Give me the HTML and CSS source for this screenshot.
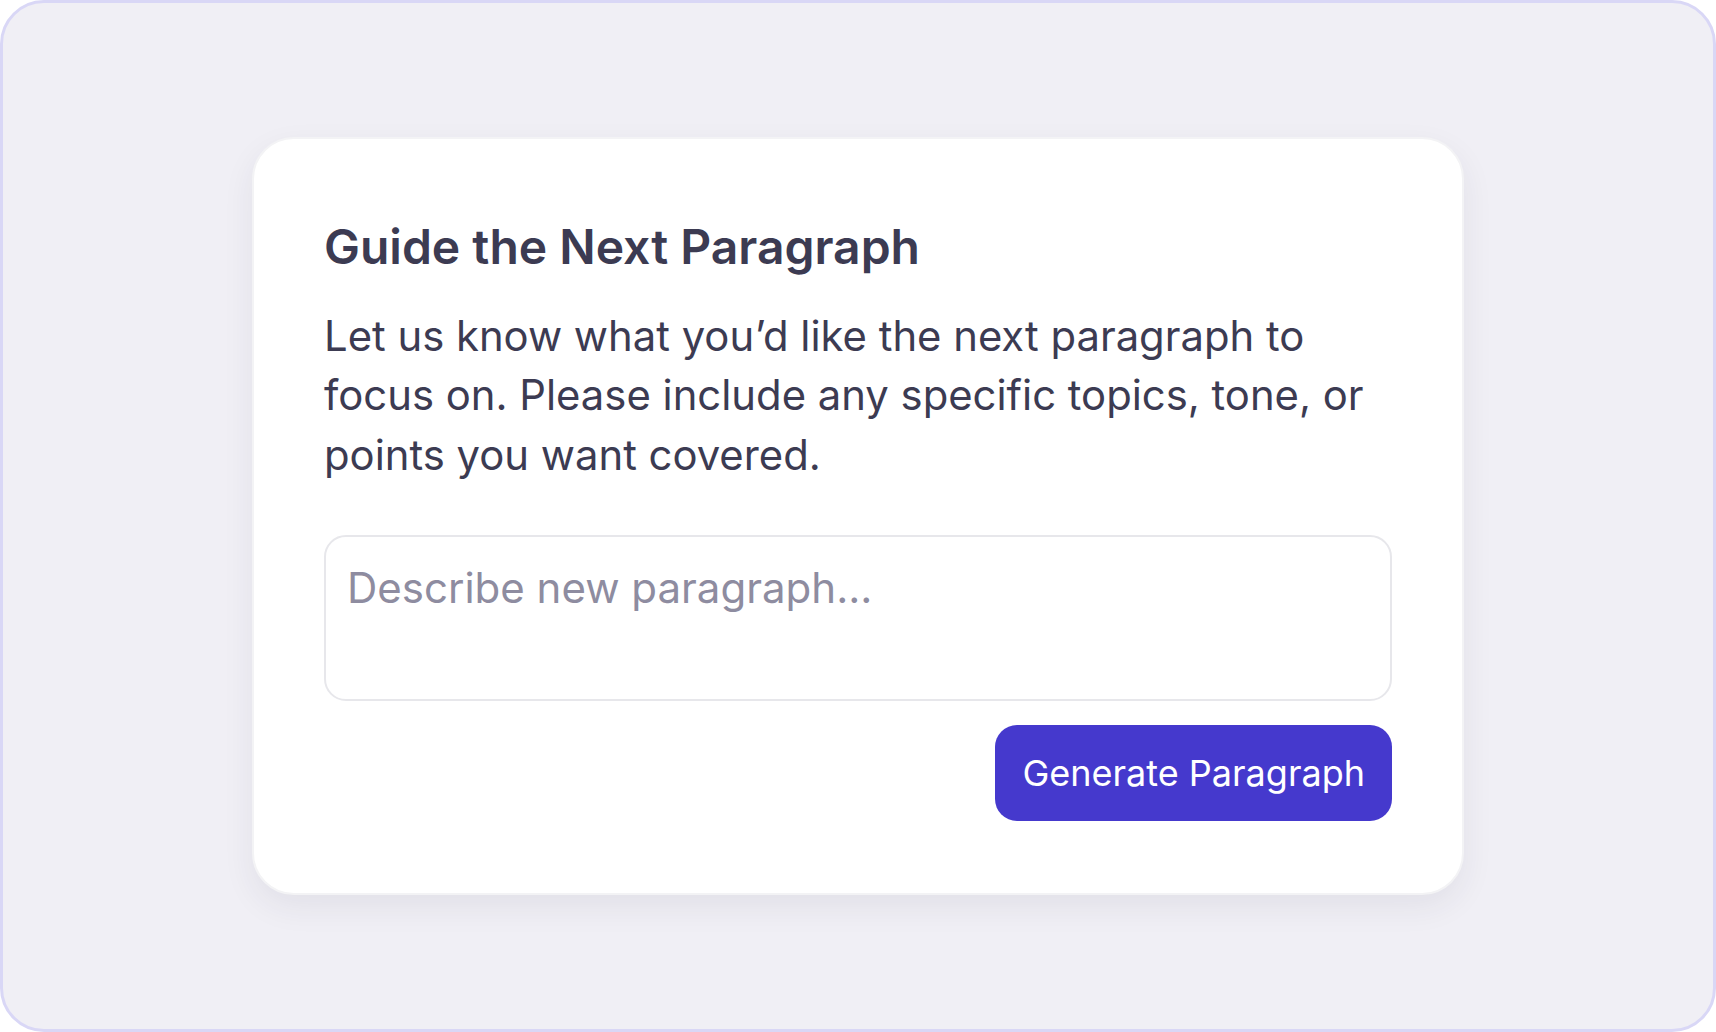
FILE: index.html
```html
<!DOCTYPE html>
<html lang="en">
<head>
    <meta charset="UTF-8">
    <meta name="viewport" content="width=device-width, initial-scale=1.0">
    <title>Guide the Next Paragraph</title>
    <link rel="stylesheet" href="styles.css">
</head>
<body>
    <div class="frame">
        <div class="card">
            <h1>Guide the Next Paragraph</h1>
            <p class="intro">Let us know what you’d like the next paragraph to focus on. Please include any specific topics, tone, or points you want covered.</p>

            <textarea class="prompt" placeholder="Describe new paragraph..."></textarea>

            <div class="actions">
                <button class="btn" type="button">Generate Paragraph</button>
            </div>
        </div>
    </div>
</body>
</html>
```

FILE: styles.css
```css
* {
    box-sizing: border-box;
}
html, body {
    height: 100%;
}
body {
    font-family: 'Inter', 'Noto Sans', sans-serif;
    background-color: #ffffff;
    color: #3c3b52;
    margin: 0;
    padding: 0;
}
.frame {
    height: 100%;
    background-color: #f0eff5;
    border: 3px solid #d9d7f6;
    border-radius: 44px;
    display: flex;
    align-items: center;
    justify-content: center;
}
.card {
    width: 1212px;
    padding: 72px 70px;
    background-color: #ffffff;
    border: 2px solid #f3f3f5;
    border-radius: 42px;
    box-shadow: 0 12px 32px rgba(40, 40, 70, 0.07);
}
h1 {
    margin: 0;
    font-size: 48px;
    line-height: 72px;
    font-weight: 600;
    color: #3c3b52;
}
.intro {
    margin: 24px 0 0;
    font-size: 41.8px;
    line-height: 59.5px;
    color: #3c3b52;
}
.prompt {
    display: block;
    width: 100%;
    height: 166px;
    margin-top: 50px;
    padding: 19px 21px;
    font-family: inherit;
    font-size: 42px;
    line-height: 63px;
    color: #3c3b52;
    border: 2px solid #e7e7eb;
    border-radius: 22px;
    resize: none;
    outline: none;
}
.prompt::placeholder {
    color: #8e8ca0;
}
.actions {
    display: flex;
    justify-content: flex-end;
    margin-top: 24px;
}
.btn {
    font-family: inherit;
    font-size: 36px;
    line-height: 56px;
    padding: 20px 27px;
    color: #ffffff;
    background-color: #4539cd;
    border: none;
    border-radius: 22px;
    cursor: pointer;
}
```
